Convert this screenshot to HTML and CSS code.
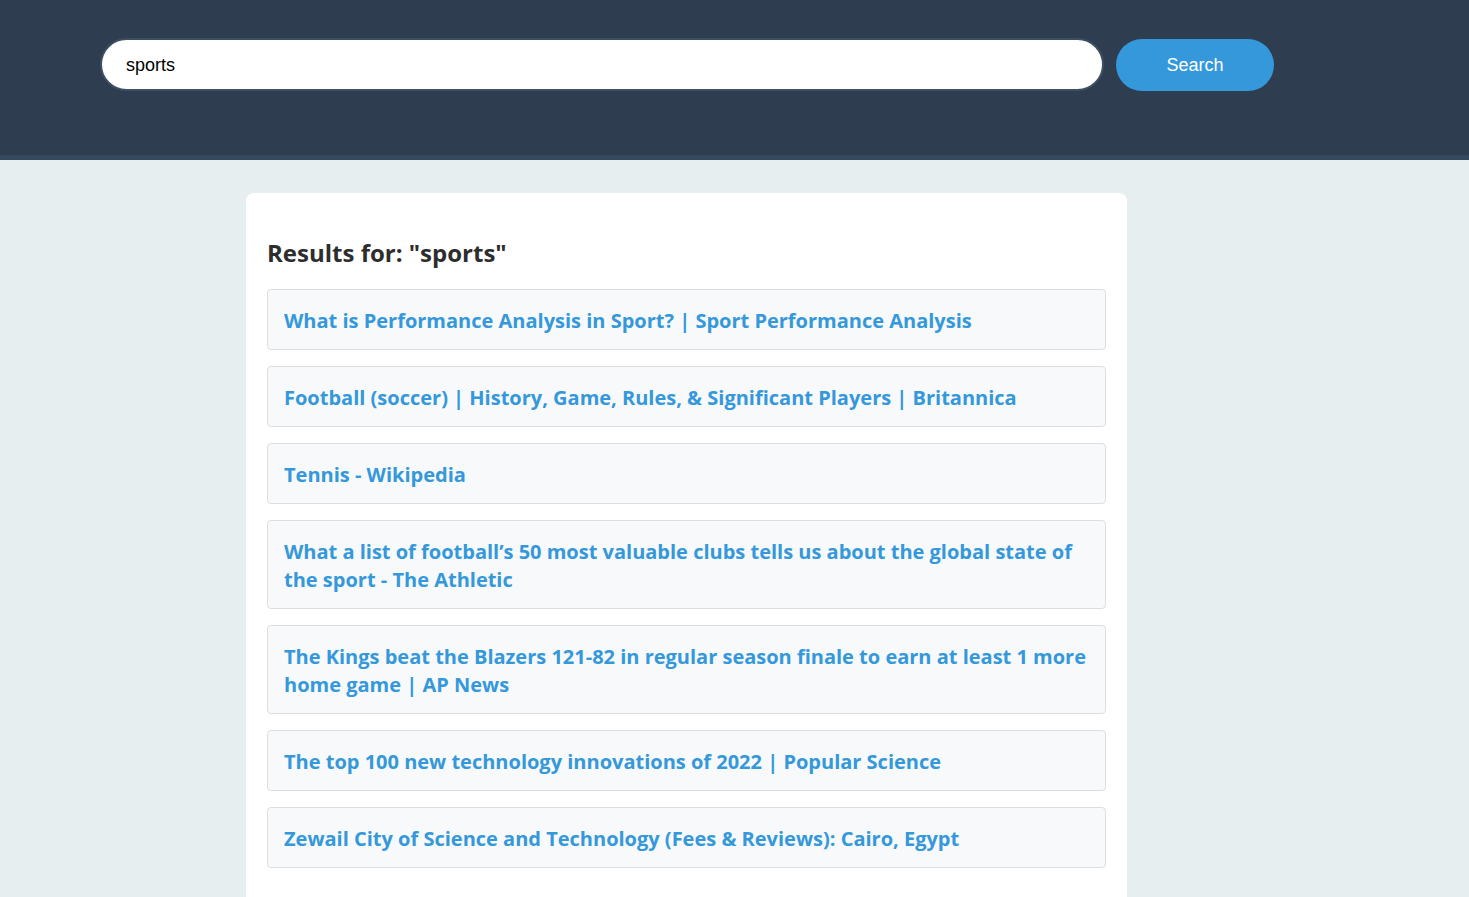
FILE: index.html
```html
<!DOCTYPE html>
<html>
<head>
<meta charset="utf-8">
<title>Search</title>
<link rel="stylesheet" href="styles.css">
</head>
<body>
<header class="header">
  <form class="search-form">
    <input class="search-input" type="text" value="sports">
    <button class="search-button" type="button">Search</button>
  </form>
</header>
<main class="main">
  <section class="card">
    <h2 class="results-title">Results for: "sports"</h2>
    <ul class="results">
      <li class="result"><a class="result-link" href="#">What is Performance Analysis in Sport? | Sport Performance Analysis</a></li>
      <li class="result"><a class="result-link" href="#">Football (soccer) | History, Game, Rules, &amp; Significant Players | Britannica</a></li>
      <li class="result"><a class="result-link" href="#">Tennis - Wikipedia</a></li>
      <li class="result"><a class="result-link" href="#">What a list of football’s 50 most valuable clubs tells us about the global state of the sport - The Athletic</a></li>
      <li class="result"><a class="result-link" href="#">The Kings beat the Blazers 121-82 in regular season finale to earn at least 1 more home game | AP News</a></li>
      <li class="result"><a class="result-link" href="#">The top 100 new technology innovations of 2022 | Popular Science</a></li>
      <li class="result"><a class="result-link" href="#">Zewail City of Science and Technology (Fees &amp; Reviews): Cairo, Egypt</a></li>
    </ul>
  </section>
</main>
</body>
</html>
```
FILE: styles.css
```css
html, body {
  margin: 0;
  padding: 0;
}
body {
  background: #e7eef0;
  font-family: "Open Sans", "Noto Sans", sans-serif;
  overflow: hidden;
  height: 897px;
}
.header {
  background: #2e3e50;
  height: 155px;
  border-bottom: 5px solid #34495e;
  box-sizing: content-box;
}
.search-form {
  display: flex;
  align-items: flex-start;
  gap: 12px;
  padding: 38px 0 0 100px;
  margin: 0;
}
.search-input {
  width: 1004px;
  height: 53px;
  box-sizing: border-box;
  border: 2px solid #3d4f63;
  border-radius: 27px;
  background: #fff;
  padding: 2px 0 0 24px;
  font-family: "Liberation Sans", Arial, sans-serif;
  font-size: 18px;
  color: #000;
  outline: none;
}
.search-button {
  width: 158px;
  height: 52px;
  margin-top: 1px;
  border: none;
  border-radius: 26px;
  background: #3498db;
  color: #fff;
  font-family: "Liberation Sans", Arial, sans-serif;
  font-size: 18px;
  cursor: pointer;
}
.main {
  padding: 33px 0 0 246px;
}
.card {
  width: 881px;
  box-sizing: border-box;
  background: #fff;
  border-radius: 8px;
  padding: 21px 21px 40px 21px;
  min-height: 800px;
}
.results-title {
  margin: 23px 0 0 0;
  font-size: 24px;
  line-height: 32px;
  font-weight: 700;
  color: #2d2d2d;
}
.results {
  list-style: none;
  margin: 20px 0 0 0;
  padding: 0;
  display: flex;
  flex-direction: column;
  gap: 16px;
}
.result {
  background: #f7f9fa;
  border: 1px solid #dcdfe2;
  border-radius: 4px;
  padding: 17px 16px 14px 16px;
}
.result-link {
  display: block;
  color: #3498db;
  text-decoration: none;
  font-weight: 700;
  font-size: 20px;
  line-height: 28px;
}
```
